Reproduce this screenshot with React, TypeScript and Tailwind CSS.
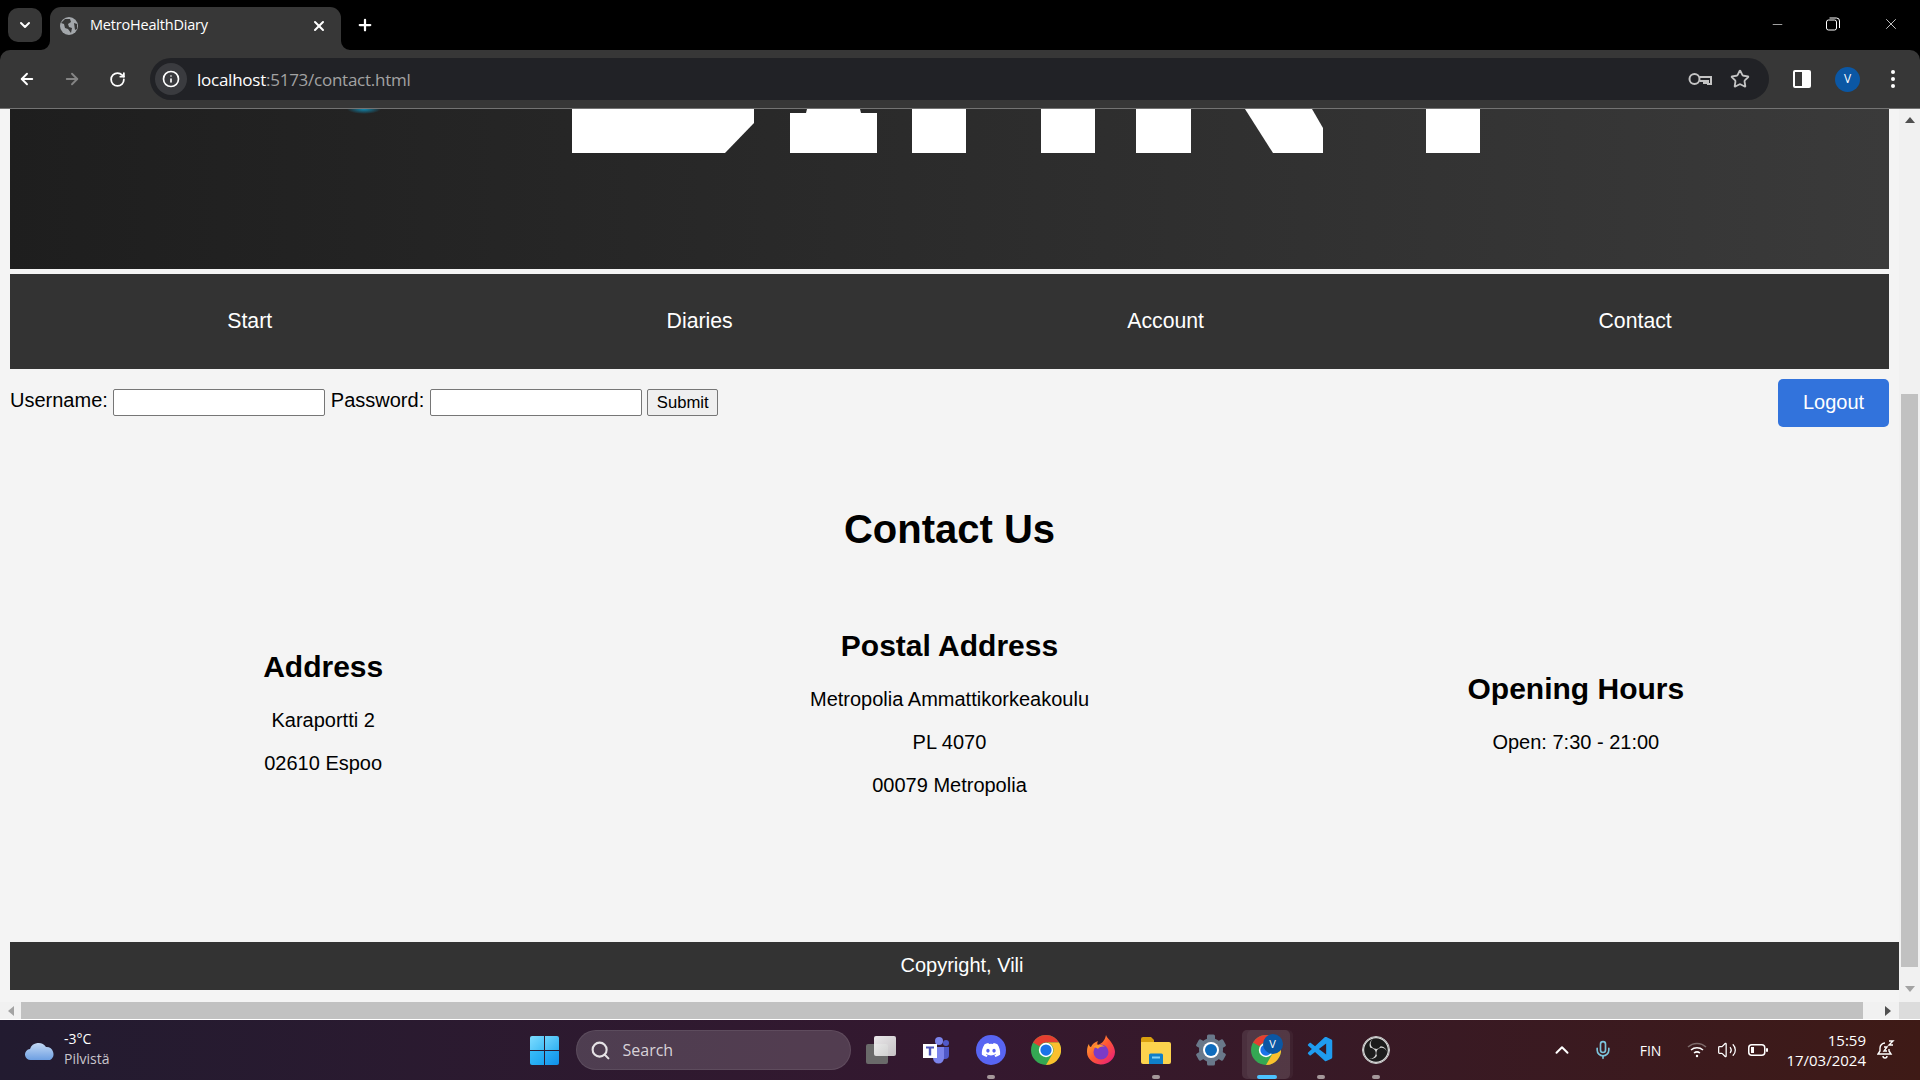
import { ArrowLeft, ArrowRight, RotateCw, Info, Star, X, Plus, ChevronDown, ChevronUp, Minus, Search, Mic, Volume2 } from "lucide-react";
import { FaDiscord } from "react-icons/fa";
import { VscVscode } from "react-icons/vsc";
import { SiObsstudio } from "react-icons/si";

const ui = { fontFamily: '"Open Sans", "Noto Sans", sans-serif' };
const page = { fontFamily: '"Liberation Sans", Arial, sans-serif' };

function ChromeLogo({ size = 30 }: { size?: number }) {
  return (
    <svg width={size} height={size} viewBox="0 0 48 48">
      <circle cx="24" cy="24" r="24" fill="#34a853" />
      <path d="M24 0a24 24 0 0 1 20.8 12H24a12 12 0 0 0-10.4 6L3.2 12A24 24 0 0 1 24 0z" fill="#e53e30" />
      <path d="M44.8 12A24 24 0 0 1 24 48l10.4-18A12 12 0 0 0 34.400 18 12 12 0 0 0 24 12z" fill="#fbc02d" />
      <circle cx="24" cy="24" r="11.500" fill="#fff" />
      <circle cx="24" cy="24" r="9" fill="#1a73e8" />
    </svg>
  );
}

function Gear() {
  return (
    <svg width="32" height="32" viewBox="0 0 32 32">
      <g fill="#69788a">
        <circle cx="16" cy="16" r="12" />
        {[0, 60, 120, 180, 240, 300].map((a) => (
          <rect key={a} x="12" y="0.500" width="8" height="8" rx="1.500" transform={`rotate(${a} 16 16)`} />
        ))}
      </g>
      <circle cx="16" cy="16" r="8" fill="#fff" />
      <circle cx="16" cy="16" r="6" fill="#0f6cbd" />
    </svg>
  );
}

function Folder() {
  return (
    <svg width="30" height="28" viewBox="0 0 30 28">
      <path d="M0 3a2 2 0 0 1 2-2h8l3 3h0v4H0z" fill="#d9a00f" />
      <path d="M0 6h28a2 2 0 0 1 2 2v18a2 2 0 0 1-2 2H2a2 2 0 0 1-2-2z" fill="#fcd34d" />
      <path d="M8 19a1.500 1.500 0 0 1 1.500-1.500h11A1.500 1.500 0 0 1 22 19v9H8z" fill="#0f7fc9" />
      <rect x="11" y="20.500" width="8" height="2" fill="#7fd0f5" />
    </svg>
  );
}

function Teams() {
  return (
    <svg width="28" height="28" viewBox="0 0 28 28">
      <circle cx="17" cy="5" r="4" fill="#7b83eb" />
      <circle cx="24" cy="7" r="3" fill="#5059c9" />
      <path d="M19 11h8v8a4 4 0 0 1-4 4h-4z" fill="#5059c9" />
      <path d="M9 11h13v11a5.500 5.500 0 0 1-11 0z" fill="#7b83eb" />
      <rect x="1" y="8" width="14" height="14" fill="#fff" />
      <path d="M4 10.500h8v2H9.200v7H6.800v-7H4z" fill="#4b53bc" />
    </svg>
  );
}

function Firefox() {
  return (
    <div className="relative w-[28px] h-[30px]">
      <svg width="28" height="30" viewBox="0 0 28 30">
        <defs>
          <linearGradient id="ff" x1="0" y1="0" x2="1" y2="1">
            <stop offset="0" stopColor="#ffbd2e" />
            <stop offset="0.500" stopColor="#ff5634" />
            <stop offset="1" stopColor="#e31587" />
          </linearGradient>
        </defs>
        <path d="M19 0c1 3 3 4 5 7 3 4 4 8 4 10a14 13 0 1 1-28-1c0-3 1-6 2-7 0 2 1 3 2 3 1-3 4-5 7-6-1 2-1 3 0 4 3-1 7-4 8-10z" fill="url(#ff)" />
        <circle cx="14" cy="17" r="7.500" fill="#7b3bc7" />
        <path d="M6 12c3-3 9-3 12 0-3-1-6 0-7 2-1-1-3-2-5-2z" fill="#ff9a2e" />
      </svg>
    </div>
  );
}

function Dot() {
  return <div className="w-[8px] h-[4px] rounded-full bg-[#a5989a]" />;
}

function TaskIcon({ children, running = false }: { children: React.ReactNode; running?: boolean }) {
  return (
    <div className="relative w-[55px] h-[60px] flex items-center justify-center">
      {children}
      {running && (
        <div className="absolute bottom-[1px] left-0 right-0 flex justify-center">
          <Dot />
        </div>
      )}
    </div>
  );
}

function Browser() {
  return (
    <div className="bg-black shrink-0" style={ui}>
      <div className="h-[50px] flex items-start text-white relative">
        <div className="w-[34px] h-[34px] ml-[8px] mt-[8px] rounded-[10px] bg-[#373737] flex items-center justify-center">
          <ChevronDown size={16} strokeWidth={3} />
        </div>
        <div className="relative w-[291px] h-[43px] ml-[8px] mt-[7px] pb-[6px] bg-[#373737] rounded-t-[11px] flex items-center pl-[10px] pr-[14px]">
          <svg className="absolute left-[-9px] bottom-0" width="9" height="9" viewBox="0 0 9 9"><path d="M9 0v9H0a9 9 0 0 0 9-9z" fill="#373737" /></svg>
          <svg className="absolute right-[-9px] bottom-0" width="9" height="9" viewBox="0 0 9 9"><path d="M0 0v9h9a9 9 0 0 1-9-9z" fill="#373737" /></svg>
          <svg width="18" height="18" viewBox="0 0 18 18">
            <circle cx="9" cy="9" r="9" fill="#a3a7ab" />
            <path d="M5 2l5 0 1 3-3 2 1 3 3 1-1 5-3-4-3-1-1-4-3-1z" fill="#373737" />
            <path d="M14 6l3 1 0 5-2 1z" fill="#373737" />
          </svg>
          <span className="ml-[2px] pl-[10px] text-[14.500px] leading-none tracking-[-0.2px]">MetroHealthDiary</span>
          <X size={16} strokeWidth={3} className="ml-auto" />
        </div>
        <Plus size={18} strokeWidth={3} className="ml-[15px] mt-[16px]" />
        <div className="ml-auto flex items-center h-[50px] pb-[2px]">
          <Minus size={15} strokeWidth={1} className="mr-[41px]" />
          <svg className="mr-[42px]" width="14" height="14" viewBox="0 0 14 14" fill="none" stroke="#fff">
            <rect x="0.500" y="3" width="10" height="10" rx="2" />
            <path d="M3.500 1h7a3 3 0 0 1 3 3v7" />
          </svg>
          <X size={18} strokeWidth={1} className="mr-[20px]" />
        </div>
      </div>
      <div className="h-[59px] bg-[#373737] rounded-t-[10px] border-b border-[#737373] flex items-center text-white">
        <div className="w-[150px] flex items-center pl-[18px] gap-[27px]">
          <ArrowLeft size={18} strokeWidth={2.500} />
          <ArrowRight size={18} strokeWidth={2.500} className="text-[#848484]" />
          <RotateCw size={17} strokeWidth={2.500} className="ml-[1px]" />
        </div>
        <div className="w-[1619px] h-[42px] rounded-full bg-[#212226] flex items-center pl-[5px] pr-[19px]">
          <div className="w-[32px] h-[32px] rounded-full bg-[#3a3b3f] flex items-center justify-center">
            <Info size={18} strokeWidth={2.200} />
          </div>
          <div className="ml-[10px] pt-[1px] text-[17px] tracking-[-0.25px] leading-none">
            localhost<span className="text-[#a3a3a3]">:5173/contact.html</span>
          </div>
          <div className="ml-auto flex items-center gap-[18px] text-[#c4c4c4]">
            <svg width="24" height="14" viewBox="0 0 24 14" fill="none" stroke="currentColor" strokeWidth="2">
              <circle cx="6.500" cy="7" r="5" />
              <path d="M11.500 5h11.500v7h-3v-3h-2v2h-2v-2h-4.500" />
            </svg>
            <Star size={20} strokeWidth={2.200} />
          </div>
        </div>
        <div className="ml-[24px] w-[18px] h-[18px] rounded-[2px] border-2 border-white bg-[#373737] flex justify-end">
          <div className="w-[7px] bg-white" />
        </div>
        <div className="ml-[24px] w-[25px] h-[25px] rounded-full bg-[#0b57a4] flex items-center justify-center text-[12px]">V</div>
        <div className="ml-[31px] flex flex-col gap-[3px]">
          <div className="w-[4px] h-[4px] rounded-full bg-white" />
          <div className="w-[4px] h-[4px] rounded-full bg-white" />
          <div className="w-[4px] h-[4px] rounded-full bg-white" />
        </div>
      </div>
    </div>
  );
}

function Logo() {
  return (
    <div className="h-[160px] ml-[10px] mr-[10px] bg-gradient-to-r from-[#1e1e1e] to-[#3a3a3a]">
      <svg width="1879" height="160" viewBox="0 0 1879 160">
        <defs>
          <radialGradient id="spot">
            <stop offset="0" stopColor="#1088b0" />
            <stop offset="1" stopColor="#1088b0" stopOpacity="0" />
          </radialGradient>
        </defs>
        <g fill="#fff" transform="translate(-10 -109)">
          <path d="M572 109H754V123L725 153H572z" />
          <path d="M790 113H806L807 109H860L861 113H877V153H790z" />
          <rect x="912" y="109" width="54" height="44" />
          <rect x="1041" y="109" width="54" height="44" />
          <rect x="1136" y="109" width="55" height="44" />
          <path d="M1245 109H1312L1323 128V153H1273z" />
          <rect x="1426" y="109" width="54" height="44" />
        </g>
        <ellipse cx="354" cy="0" rx="17" ry="5" fill="url(#spot)" />
      </svg>
    </div>
  );
}

function Column({ title, lines }: { title: string; lines: string[] }) {
  return (
    <div className="flex flex-col items-center text-center">
      <h3 className="text-[30px] font-bold leading-[32px] mb-[26px]">{title}</h3>
      {lines.map((l, i) => (
        <p key={l} className={`text-[20px] leading-[23px] ${i < lines.length - 1 ? "mb-[20px]" : ""}`}>{l}</p>
      ))}
    </div>
  );
}

function Content() {
  return (
    <div className="flex-1 min-w-0 overflow-hidden flex flex-col bg-[#f4f4f4] text-black" style={page}>
      <Logo />
      <div className="h-[5px]" />
      <nav className="h-[95px] mx-[10px] bg-[#333333] text-white text-[21.250px] flex items-center justify-around px-[20px]">
        <span>Start</span>
        <span>Diaries</span>
        <span>Account</span>
        <span>Contact</span>
      </nav>
      <div className="mt-[10px] mx-[10px] h-[48px] flex items-center">
        <form className="flex items-center text-[20px] -mt-[1px]">
          <label className="-mt-[6px]">Username:</label>
          <input className="ml-[5px] w-[212px] h-[27px] bg-white border border-[#767676] rounded-[2px]" />
          <label className="ml-[6px] -mt-[6px]">Password:</label>
          <input className="ml-[6px] w-[212px] h-[27px] bg-white border border-[#767676] rounded-[2px]" />
          <button type="button" className="ml-[5px] w-[71px] h-[27px] pt-[2px] text-[16.670px] leading-none bg-[#efefef] border border-[#767676] rounded-[2px]">Submit</button>
        </form>
        <button type="button" className="ml-auto w-[111px] h-[48px] pb-[2px] bg-[#3273dc] text-white text-[20px] rounded-[5px]">Logout</button>
      </div>
      <h2 className="mt-[79px] text-center text-[40px] font-bold leading-[46px]">Contact Us</h2>
      <div className="mx-[10px] w-[1879px] h-[260px] mt-[31px] grid grid-cols-3 items-center">
        <Column title="Address" lines={["Karaportti 2", "02610 Espoo"]} />
        <Column title="Postal Address" lines={["Metropolia Ammattikorkeakoulu", "PL 4070", "00079 Metropolia"]} />
        <Column title="Opening Hours" lines={["Open: 7:30 - 21:00"]} />
      </div>
      <footer className="mt-auto mb-[12px] ml-[10px] h-[48px] pb-[2px] bg-[#333333] text-white text-[20px] flex items-center justify-center pl-[15px]">Copyright, Vili</footer>
    </div>
  );
}

function VBar() {
  return (
    <div className="w-[21px] bg-[#f1f1f1] flex flex-col items-center shrink-0">
      <svg className="mt-[8px]" width="10" height="6" viewBox="0 0 10 6"><path d="M5 0l5 6H0z" fill="#505050" /></svg>
      <div className="w-[17px] flex-1 mt-[271px] mb-[19px] bg-[#c1c1c1]" />
      <svg className="mb-[10px]" width="10" height="6" viewBox="0 0 10 6"><path d="M5 6l5-6H0z" fill="#a3a3a3" /></svg>
    </div>
  );
}

function HBar() {
  return (
    <div className="h-[18px] flex shrink-0 border-b border-white box-border">
      <div className="flex-1 bg-[#f1f1f1] flex items-center">
        <svg className="ml-[8px]" width="6" height="10" viewBox="0 0 6 10"><path d="M0 5l6-5v10z" fill="#a3a3a3" /></svg>
        <div className="ml-[7px] w-[1842px] h-full bg-[#c1c1c1]" />
        <svg className="ml-[22px]" width="6" height="10" viewBox="0 0 6 10"><path d="M6 5L0 0v10z" fill="#505050" /></svg>
      </div>
      <div className="w-[21px] bg-[#dcdcdc]" />
    </div>
  );
}

function Taskbar() {
  return (
    <div className="h-[60px] shrink-0 grid grid-cols-[1fr_auto_1fr] items-center text-white bg-gradient-to-r from-[#221b30] via-[#34182f] to-[#3e1a16]" style={ui}>
      <div className="flex items-center pl-[25px]">
        <svg width="31" height="21" viewBox="0 0 31 21">
          <defs>
            <linearGradient id="cl" x1="0" y1="0" x2="0" y2="1">
              <stop offset="0" stopColor="#c3d9f5" />
              <stop offset="1" stopColor="#6d9fe2" />
            </linearGradient>
          </defs>
          <path d="M6 20a5.500 5.500 0 0 1-1-11 9 9 0 0 1 16-2 7 7 0 0 1 4 13z" fill="url(#cl)" />
        </svg>
        <div className="ml-[8px] pb-[2px] text-[14px] leading-[20px]">
          <div>-3°C</div>
          <div className="text-[#c9c5cc]">Pilvistä</div>
        </div>
      </div>
      <div className="flex items-center">
        <div className="w-[56px] flex justify-center">
          <div className="grid grid-cols-2 gap-[1px] w-[29px] h-[29px]">
            <div className="bg-gradient-to-br from-[#7cdcff] to-[#3fbdf5] rounded-tl-[2px]" />
            <div className="bg-gradient-to-br from-[#6cd3fb] to-[#2cb0f2] rounded-tr-[2px]" />
            <div className="bg-gradient-to-br from-[#38bdf8] to-[#1aa3ef] rounded-bl-[2px]" />
            <div className="bg-gradient-to-br from-[#2cb0f5] to-[#0f8fe8] rounded-br-[2px]" />
          </div>
        </div>
        <div className="ml-[3px] mr-[3px] w-[275px] h-[40px] rounded-full bg-white/[0.16] border border-white/[0.08] flex items-center pl-[13px]">
          <Search size={21} strokeWidth={2.400} className="text-[#e5e2e5]" />
          <span className="ml-[12px] text-[16px] text-[#d8d2d8]">Search</span>
        </div>
        <TaskIcon>
          <div className="relative w-[30px] h-[28px]">
            <div className="absolute left-0 bottom-0 w-[22px] h-[20px] rounded-[2px] bg-[#6a6a6a]" />
            <div className="absolute right-0 top-0 w-[22px] h-[20px] rounded-[2px] bg-gradient-to-br from-white to-[#d5d5d5] opacity-90" />
          </div>
        </TaskIcon>
        <TaskIcon><Teams /></TaskIcon>
        <TaskIcon running>
          <div className="w-[30px] h-[30px] rounded-full bg-[#5865f2] flex items-center justify-center">
            <FaDiscord size={20} color="#fff" />
          </div>
        </TaskIcon>
        <TaskIcon><ChromeLogo /></TaskIcon>
        <TaskIcon><Firefox /></TaskIcon>
        <TaskIcon running><Folder /></TaskIcon>
        <TaskIcon><Gear /></TaskIcon>
        <div className="relative w-[55px] h-[60px] flex items-center justify-center">
          <div className="absolute left-[3px] top-[10px] w-[48px] h-[49px] rounded-[5px] bg-white/[0.10]" />
          <div className="absolute left-[8px] top-[10px] w-[46px] h-[49px] rounded-[5px] bg-white/[0.04]" />
          <div className="relative"><ChromeLogo /></div>
          <div className="absolute right-[11px] top-[14px] w-[20px] h-[20px] rounded-full bg-[#0b57a4] text-[11px] flex items-center justify-center">V</div>
          <div className="absolute bottom-[1px] left-[18px] w-[20px] h-[4px] rounded-full bg-[#4cc2ff]" />
        </div>
        <TaskIcon running><VscVscode size={30} color="#1f9cf0" /></TaskIcon>
        <TaskIcon running>
          <div className="w-[28px] h-[28px] rounded-full bg-[#1c1c1c] border border-[#d0d0d0] flex items-center justify-center">
            <SiObsstudio size={26} color="#d8d8d8" />
          </div>
        </TaskIcon>
      </div>
      <div className="flex items-center justify-end pr-[25px]">
        <ChevronUp size={22} strokeWidth={2.200} className="mr-[20px]" />
        <Mic size={20} strokeWidth={2} className="mr-[27px] text-[#7cc4dc]" />
        <span className="mr-[26px] text-[14px]">FIN</span>
        <svg className="mr-[10px]" width="20" height="16" viewBox="0 0 20 16" fill="none" stroke="#fff" strokeWidth="1.500">
          <path d="M1 5a13 13 0 0 1 18 0" stroke="#7d6a6a" />
          <path d="M4 8a9 9 0 0 1 12 0" />
          <path d="M7 11a5 5 0 0 1 6 0" />
          <circle cx="10" cy="14" r="1.200" fill="#fff" stroke="none" />
        </svg>
        <Volume2 size={20} strokeWidth={1.500} className="mr-[11px]" />
        <svg className="mr-[18px]" width="20" height="12" viewBox="0 0 20 12" fill="none">
          <rect x="0.750" y="0.750" width="16" height="10.500" rx="3" stroke="#fff" strokeWidth="1.500" />
          <rect x="3" y="3" width="3" height="6" fill="#fff" />
          <rect x="18" y="4" width="2" height="4" rx="1" fill="#fff" />
        </svg>
        <div className="text-[15px] leading-[20px] text-right">
          <div>15:59</div>
          <div>17/03/2024</div>
        </div>
        <svg className="ml-[11px]" width="18" height="20" viewBox="0 0 18 20" fill="none" stroke="#fff" strokeWidth="1.400">
          <path d="M8 3a5 5 0 0 0-5 5v3l-2 3h13l-2-3V9" />
          <path d="M6 16a2 2 0 0 0 4 0" />
          <path d="M7 7h3l-3 4h3M12 1h4l-4 4h4" />
        </svg>
      </div>
    </div>
  );
}

export default function App() {
  return (
    <div className="w-[1920px] h-[1080px] flex flex-col overflow-hidden">
      <Browser />
      <div className="flex-1 min-h-0 flex">
        <Content />
        <VBar />
      </div>
      <HBar />
      <Taskbar />
    </div>
  );
}
